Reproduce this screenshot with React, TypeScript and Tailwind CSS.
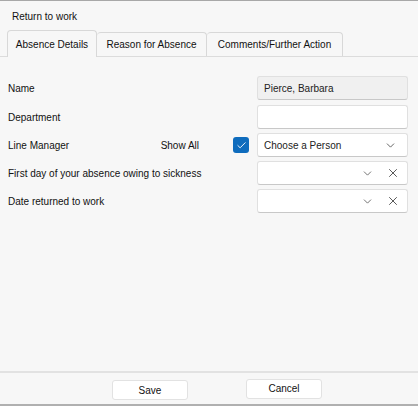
import { Check, ChevronDown, X } from "lucide-react";

const font = { fontFamily: '"Liberation Sans", Arial, sans-serif' };

const Field = ({ children, grey }: { children?: React.ReactNode; grey?: boolean }) => (
  <div
    className={`w-[151px] h-6 flex items-center rounded-[3px] border border-[#e0e0e0] border-b-[#c8c8c8] px-[6px] ${
      grey ? "bg-[#f0f0f0] border-[#d4d4d4]" : "bg-white"
    }`}
  >
    {children}
  </div>
);

const DateField = () => (
  <Field>
    <span className="flex-1" />
    <ChevronDown size={13} strokeWidth={1.5} className="text-[#555] mr-[12px]" />
    <X size={14} strokeWidth={1.4} className="text-[#333] mr-[1px]" />
  </Field>
);

export default function App() {
  return (
    <div
      style={font}
      className="w-[418px] h-[406px] bg-[#f7f7f7] border-t border-[#a8a8a8] border-b-2 border-b-[#b0b0b0] flex flex-col text-[10px] text-[#111]"
    >
      <div className="h-[29px] flex items-center px-3 pt-[1px]">Return to work</div>

      <div className="flex items-end h-[27px] pl-[7px] border-b border-[#dcdcdc]">
        <div className="h-[27px] w-[90px] -mb-px flex items-center justify-center bg-[#f7f7f7] border border-b-0 border-[#d8d8d8] rounded-t-[4px]">
          Absence Details
        </div>
        <div className="h-[24px] w-[110px] flex items-center justify-center border border-b-0 border-l-0 border-[#d8d8d8] rounded-t-[4px]">
          Reason for Absence
        </div>
        <div className="h-[24px] w-[136px] flex items-center justify-center border border-b-0 border-l-0 border-[#d8d8d8] rounded-t-[4px]">
          Comments/Further Action
        </div>
      </div>

      <div className="flex flex-col gap-1 pl-2 pr-[10px] pt-[19px]">
        <div className="flex items-center">
          <span className="flex-1">Name</span>
          <div className="h-[25px]">
            <Field grey>
              <span className="text-[#222]">Pierce, Barbara</span>
            </Field>
          </div>
        </div>
        <div className="flex items-center">
          <span className="flex-1">Department</span>
          <Field />
        </div>
        <div className="flex items-center">
          <span className="flex-1">Line Manager</span>
          <span className="mr-[34px]">Show All</span>
          <div className="w-4 h-4 mr-2 rounded-[3px] bg-[#0f6cbd] flex items-center justify-center">
            <Check size={11} strokeWidth={2} className="text-white" />
          </div>
          <Field>
            <span className="flex-1 text-[#222]">Choose a Person</span>
            <ChevronDown size={13} strokeWidth={1.5} className="text-[#444] mr-[4px]" />
          </Field>
        </div>
        <div className="flex items-center">
          <span className="flex-1">First day of your absence owing to sickness</span>
          <DateField />
        </div>
        <div className="flex items-center">
          <span className="flex-1">Date returned to work</span>
          <DateField />
        </div>
      </div>

      <div className="flex-1" />

      <div className="h-[33px] border-t-2 border-[#e2e2e2] flex items-center">
        <button className="ml-[112px] w-[76px] h-5 bg-white border border-[#e2e2e2] rounded-[3px] mt-[3px]">
          Save
        </button>
        <button className="ml-[58px] w-[76px] h-5 bg-white border border-[#e2e2e2] rounded-[3px]">
          Cancel
        </button>
      </div>
    </div>
  );
}
